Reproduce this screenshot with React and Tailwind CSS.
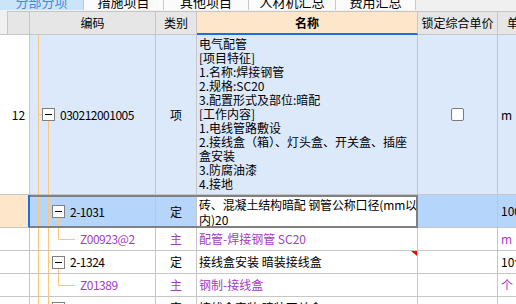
import React from "react"

const ORANGE = "#fbc677"

// tree connector lines drawn over a code cell
function Lines({ segs }) {
  return (
    <svg className="absolute inset-0 w-full h-full pointer-events-none" xmlns="http://www.w3.org/2000/svg">
      {segs.map(([x1, y1, x2, y2], i) => (
        <line key={i} x1={x1} y1={y1} x2={x2} y2={y2} stroke={ORANGE} strokeWidth="1" />
      ))}
    </svg>
  )
}

function Minus() {
  return (
    <div className="relative w-[13px] h-[13px] shrink-0 border border-[#808080] bg-white flex items-center justify-center">
      <div className="w-[7px] h-px bg-black" />
    </div>
  )
}

const featureLines = [
  "电气配管",
  "[项目特征]",
  "1.名称:焊接钢管",
  "2.规格:SC20",
  "3.配置形式及部位:暗配",
  "[工作内容]",
  "1.电线管路敷设",
  "2.接线盒（箱）、灯头盒、开关盒、插座",
  "盒安装",
  "3.防腐油漆",
  "4.接地",
]

function ChildRow({ code, name, unit }) {
  return (
    <div className="flex h-[23px] border-b border-[#c6c6c6] bg-white text-[#a33cc4]">
      <div className="w-[30px] shrink-0 border-r border-[#c6c6c6]" />
      <div className="relative w-[126px] shrink-0 border-r border-[#c6c6c6] flex items-center pl-[50px]">
        <Lines segs={[[8.5, 0, 8.5, 22], [18.5, 0, 18.5, 22], [28.5, 0, 28.5, 11.5], [28.5, 11.5, 45, 11.5]]} />
        <span className="relative tracking-[-0.5px]">{code}</span>
      </div>
      <div className="w-[41px] shrink-0 border-r border-[#c6c6c6] flex items-center justify-center">主</div>
      <div className="w-[221px] shrink-0 border-r border-[#c6c6c6] flex items-center pl-[2px] whitespace-nowrap">{name}</div>
      <div className="w-[80px] shrink-0 border-r border-[#c6c6c6]" />
      <div className="flex-1 flex items-center pl-[3px] whitespace-nowrap">{unit}</div>
    </div>
  )
}

function QuotaRow({ code, name, unit, flag }) {
  return (
    <div className="flex h-[23px] border-b border-[#c6c6c6] bg-white">
      <div className="w-[30px] shrink-0 border-r border-[#c6c6c6]" />
      <div className="relative w-[126px] shrink-0 border-r border-[#c6c6c6] flex items-center pl-[22px]">
        <Lines segs={[[8.5, 0, 8.5, 22], [18.5, 0, 18.5, 22], [18.5, 11, 22, 11], [28.5, 17, 28.5, 22]]} />
        <Minus />
        <span className="relative ml-[5px] tracking-[-0.5px]">{code}</span>
      </div>
      <div className="w-[41px] shrink-0 border-r border-[#c6c6c6] flex items-center justify-center">定</div>
      <div className="relative w-[221px] shrink-0 border-r border-[#c6c6c6] flex items-center pl-[2px] whitespace-nowrap">
        {name}
        {flag && (
          <svg className="absolute top-0 right-0" width="6" height="5" xmlns="http://www.w3.org/2000/svg">
            <polygon points="0,0 6,0 6,5" fill="#ff0000" />
          </svg>
        )}
      </div>
      <div className="w-[80px] shrink-0 border-r border-[#c6c6c6]" />
      <div className="flex-1 flex items-center pl-[3px] whitespace-nowrap">{unit}</div>
    </div>
  )
}

export default function App() {
  const tabs = [
    { label: "分部分项", w: "w-[84px]", active: true },
    { label: "措施项目", w: "w-[80px]" },
    { label: "其他项目", w: "w-[85px]" },
    { label: "人材机汇总", w: "w-[87px]" },
    { label: "费用汇总", w: "w-[80px]" },
  ]

  return (
    <div className="w-[516px] h-[304px] overflow-hidden bg-[#f0f0f0] font-['Noto_Sans_CJK_SC',sans-serif] text-[12px] text-black">
      {/* tab strip, scrolled so only the lower half shows */}
      <div className="flex h-[10px] overflow-hidden">
        {tabs.map((t) => (
          <div
            key={t.label}
            className={`${t.w} shrink-0 border-r border-[#c8c8c8] flex justify-center items-start text-[13px] ${
              t.active ? "bg-[#cce4f7] text-[#3d8be0]" : "bg-[#fbfbfb] text-black"
            }`}
          >
            <span className="-mt-[5px] leading-[13px] whitespace-nowrap">{t.label}</span>
          </div>
        ))}
        <div className="flex-1 bg-[#f0f0f0]" />
      </div>
      <div className="h-px bg-[#f0f0f0]" />

      {/* header */}
      <div className="flex h-[24px]">
        <div className="w-[8px] shrink-0 bg-[#f0f0f0] border-r border-b border-[#c6c6c6]" />
        <div className="w-[22px] shrink-0 bg-[#e6e6e6] border-t border-r border-b border-[#c6c6c6]" />
        <div className="w-[126px] shrink-0 bg-[#e6e6e6] border-t border-r border-b border-[#c6c6c6] flex items-center justify-center">编码</div>
        <div className="w-[41px] shrink-0 bg-[#e6e6e6] border-t border-r border-b border-[#c6c6c6] flex items-center justify-center">类别</div>
        <div className="w-[221px] shrink-0 bg-[#fde6c9] border-t border-t-[#c6c6c6] border-r border-r-[#c6c6c6] border-b-2 border-b-[#1a6fe6] flex items-center justify-center font-bold">名称</div>
        <div className="w-[80px] shrink-0 bg-[#e6e6e6] border-t border-r border-b border-[#c6c6c6] flex items-center justify-center whitespace-nowrap">锁定综合单价</div>
        <div className="flex-1 bg-[#e6e6e6] border-t border-b border-[#c6c6c6] flex items-center pl-[9px]">单</div>
      </div>

      {/* row 12 : list item */}
      <div className="flex h-[160px] border-b border-[#c6c6c6]">
        <div className="w-[30px] shrink-0 bg-white border-r border-[#c6c6c6] flex items-center justify-center pl-[8px]">12</div>
        <div className="relative w-[126px] shrink-0 bg-[#dce9fb] border-r border-[#c6c6c6] flex items-center pl-[12px]">
          <Lines segs={[[8.5, 0, 8.5, 159], [8.5, 79.5, 12, 79.5], [18.5, 86, 18.5, 159]]} />
          <Minus />
          <span className="relative ml-[5px] tracking-[-0.5px]">030212001005</span>
        </div>
        <div className="w-[41px] shrink-0 bg-[#dce9fb] border-r border-[#c6c6c6] flex items-center justify-center">项</div>
        <div className="w-[221px] shrink-0 bg-[#dce9fb] border-r border-[#c6c6c6] pl-[2px] pt-[2px] leading-[14px] overflow-hidden">
          {featureLines.map((l, i) => (
            <div key={i} className="whitespace-nowrap">{l}</div>
          ))}
        </div>
        <div className="w-[80px] shrink-0 bg-[#dce9fb] border-r border-[#c6c6c6] flex items-center justify-center">
          <div className="w-[13px] h-[13px] rounded-[2px] border border-[#7a7a7a] bg-white" />
        </div>
        <div className="flex-1 bg-[#dce9fb] flex items-center pl-[3px]">m</div>
      </div>

      {/* selected quota row */}
      <div className="flex h-[33px]">
        <div className="w-[30px] shrink-0 bg-[#fde6c9] border-r-2 border-r-[#1a6fe6] border-b border-b-[#c6c6c6]" />
        <div className="flex w-[388px] shrink-0 border-y-2 border-r-2 border-[#808080]">
          <div className="relative w-[126px] shrink-0 bg-[#b5d5fb] border-r border-[#c6c6c6] flex items-center pl-[22px]">
            <Lines segs={[[8.5, 0, 8.5, 29], [18.5, 0, 18.5, 29], [18.5, 14.5, 22, 14.5], [28.5, 21, 28.5, 29]]} />
            <Minus />
            <span className="relative ml-[5px] tracking-[-0.5px]">2-1031</span>
          </div>
          <div className="w-[41px] shrink-0 bg-[#b5d5fb] border-r border-[#c6c6c6] flex items-center justify-center">定</div>
          <div className="flex-1 bg-white pl-[2px] leading-[15px] overflow-hidden">
            <div className="whitespace-nowrap tracking-[-0.15px]">砖、混凝土结构暗配 钢管公称口径(mm以</div>
            <div className="whitespace-nowrap">内)20</div>
          </div>
        </div>
        <div className="w-[80px] shrink-0 bg-[#b5d5fb] border-r border-b border-[#c6c6c6]" />
        <div className="flex-1 bg-[#b5d5fb] border-b border-[#c6c6c6] flex items-center pl-[3px]">100</div>
      </div>

      <ChildRow code="Z00923@2" name="配管-焊接钢管 SC20" unit="m" />
      <QuotaRow code="2-1324" name="接线盒安装 暗装接线盒" unit="10个" flag />
      <ChildRow code="Z01389" name="钢制-接线盒" unit="个" />
      <QuotaRow code="2-1325" name="接线盒安装 暗装开关盒" unit="10个" />
    </div>
  )
}
